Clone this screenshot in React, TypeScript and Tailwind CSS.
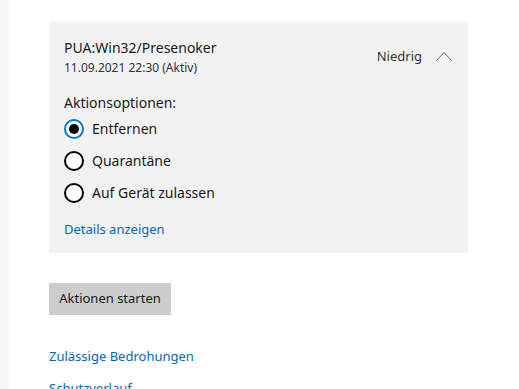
import { useState } from "react";

const options = ["Entfernen", "Quarantäne", "Auf Gerät zulassen"];

function Radio({ checked }: { checked: boolean }) {
  return checked ? (
    <span className="flex h-5 w-5 items-center justify-center rounded-full border-[2px] border-[#0078d7] bg-white">
      <span className="h-[10px] w-[10px] rounded-full bg-black" />
    </span>
  ) : (
    <span className="h-5 w-5 rounded-full border-[2px] border-black bg-white" />
  );
}

export default function App() {
  const [selected, setSelected] = useState(0);

  return (
    <div
      className="flex min-h-[389px] overflow-hidden bg-white text-black"
      style={{ fontFamily: '"Noto Sans", "Open Sans", sans-serif' }}
    >
      <div className="w-[9px] shrink-0 bg-[#f7f7f7]" />
      <div className="pl-10 pt-[22px]">
        <div className="w-[419px] bg-[#f2f2f2] px-[15px] pt-[16px] pb-[14px]">
          <div className="flex items-start justify-between">
            <div>
              <div className="text-[14px] leading-[20px] text-[#1a1a1a]">PUA:Win32/Presenoker</div>
              <div className="mt-[2px] text-[12px] leading-[16px] text-[#333]">11.09.2021 22:30 (Aktiv)</div>
            </div>
            <div className="mt-[8px] flex items-center gap-[14px] pr-[1px]">
              <span className="text-[13px] leading-[20px] text-[#333]">Niedrig</span>
              <svg width="16" height="10" viewBox="0 0 16 10" fill="none">
                <path d="M0.5 9.5 L8 1.5 L15.5 9.5" stroke="#666" strokeWidth="1" />
              </svg>
            </div>
          </div>
          <div className="mt-[17px] text-[14px] leading-[20px] text-[#1a1a1a]">Aktionsoptionen:</div>
          <div className="flex flex-col">
            {options.map((o, i) => (
              <button
                key={o}
                onClick={() => setSelected(i)}
                className="flex h-8 items-center gap-[8px] text-left"
              >
                <Radio checked={selected === i} />
                <span className="text-[14px] leading-[20px] text-[#1a1a1a]">{o}</span>
              </button>
            ))}
          </div>
          <a href="#" className="mt-[10px] block text-[13px] leading-[20px] text-[#0067b8]">
            Details anzeigen
          </a>
        </div>
        <button className="mt-[30px] h-8 w-[122px] bg-[#cccccc] text-[13px] text-[#1a1a1a]">
          Aktionen starten
        </button>
        <div className="mt-[31px] flex flex-col gap-[12px]">
          <a href="#" className="text-[13px] leading-[20px] text-[#0067b8]">Zulässige Bedrohungen</a>
          <a href="#" className="text-[13px] leading-[20px] text-[#0067b8]">Schutzverlauf</a>
        </div>
      </div>
    </div>
  );
}
